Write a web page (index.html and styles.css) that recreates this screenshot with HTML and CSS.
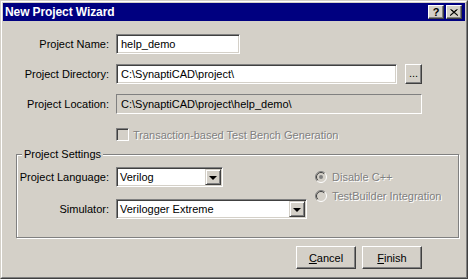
FILE: index.html
```html
<!DOCTYPE html>
<html lang="en">
<head>
    <meta charset="UTF-8">
    <title>New Project Wizard</title>
    <link rel="stylesheet" href="styles.css">
</head>
<body>
    <div class="window">
        <div class="frame">
            <div class="titlebar">
                <span class="title">New Project Wizard</span>
                <div class="caption-btns">
                    <span class="cap-btn">?</span>
                    <span class="cap-btn">
                        <svg width="8" height="7" viewBox="0 0 8 7">
                            <path d="M0.5 0.5 L7.5 6.5 M1.5 0.5 L8 6.5 M7.5 0.5 L0.5 6.5 M6.5 0.5 L0 6.5" stroke="#000" stroke-width="1" fill="none"/>
                        </svg>
                    </span>
                </div>
            </div>

            <div class="content">
                <div class="row">
                    <span class="label">Project Name:</span>
                    <div class="edit name">help_demo</div>
                </div>
                <div class="row">
                    <span class="label">Project Directory:</span>
                    <div class="edit dir">C:\SynaptiCAD\project\</div>
                    <span class="btn browse">...</span>
                </div>
                <div class="row">
                    <span class="label">Project Location:</span>
                    <div class="edit readonly">C:\SynaptiCAD\project\help_demo\</div>
                </div>
                <div class="check-row">
                    <span class="checkbox"></span>
                    <span class="disabled">Transaction-based Test Bench Generation</span>
                </div>

                <!-- Project Settings group -->
                <div class="group">
                    <span class="legend">Project Settings</span>
                    <div class="group-left">
                        <div class="row">
                            <span class="label small">Project Language:</span>
                            <div class="combo lang">
                                <span class="combo-text">Verilog</span>
                                <span class="combo-btn"><span class="arrow"></span></span>
                            </div>
                        </div>
                        <div class="row">
                            <span class="label small">Simulator:</span>
                            <div class="combo sim">
                                <span class="combo-text">Verilogger Extreme</span>
                                <span class="combo-btn"><span class="arrow"></span></span>
                            </div>
                        </div>
                    </div>
                    <div class="group-right">
                        <div class="radio-row">
                            <svg class="radio" width="12" height="12" viewBox="0 0 12 12">
                                <circle cx="6" cy="6" r="5" fill="#d4d0c8"/>
                                <path d="M2.1 9.9 A5.5 5.5 0 0 1 9.9 2.1" stroke="#808080" fill="none"/>
                                <path d="M9.9 2.1 A5.5 5.5 0 0 1 2.1 9.9" stroke="#fff" fill="none"/>
                                <path d="M2.8 9.2 A4.5 4.5 0 0 1 9.2 2.8" stroke="#404040" fill="none"/>
                                <circle cx="6" cy="6" r="2" fill="#808080"/>
                            </svg>
                            <span class="disabled">Disable C++</span>
                        </div>
                        <div class="radio-row">
                            <svg class="radio" width="12" height="12" viewBox="0 0 12 12">
                                <circle cx="6" cy="6" r="5" fill="#d4d0c8"/>
                                <path d="M2.1 9.9 A5.5 5.5 0 0 1 9.9 2.1" stroke="#808080" fill="none"/>
                                <path d="M9.9 2.1 A5.5 5.5 0 0 1 2.1 9.9" stroke="#fff" fill="none"/>
                                <path d="M2.8 9.2 A4.5 4.5 0 0 1 9.2 2.8" stroke="#404040" fill="none"/>
                            </svg>
                            <span class="disabled">TestBuilder Integration</span>
                        </div>
                    </div>
                </div>

                <div class="buttons">
                    <span class="btn push"><u>C</u>ancel</span>
                    <span class="btn push"><u>F</u>inish</span>
                </div>
            </div>
        </div>
    </div>
</body>
</html>
```

FILE: styles.css
```css
/* Base */
body {
    margin: 0;
    padding: 0;
    font-family: "Liberation Sans", Arial, sans-serif;
    font-size: 11px;
    color: #000;
    background: #d4d0c8;
}
.window {
    width: 468px;
    height: 279px;
    box-sizing: border-box;
    border: 1px solid;
    border-color: #d4d0c8 #404040 #404040 #d4d0c8;
}
.frame {
    height: 100%;
    box-sizing: border-box;
    border: 1px solid;
    border-color: #fff #808080 #808080 #fff;
    padding: 1px;
    display: flex;
    flex-direction: column;
}

/* Title bar */
.titlebar {
    height: 18px;
    background: #000080;
    color: #fff;
    display: flex;
    align-items: center;
    justify-content: space-between;
    padding: 0 3px 0 2px;
    flex-shrink: 0;
}
.title {
    font-weight: bold;
    font-size: 12px;
    letter-spacing: -0.1px;
}
.caption-btns {
    display: flex;
    gap: 2px;
}
.cap-btn {
    width: 16px;
    height: 14px;
    box-sizing: border-box;
    background: #d4d0c8;
    border: 1px solid;
    border-color: #fff #404040 #404040 #fff;
    box-shadow: inset -1px -1px #808080;
    color: #000;
    font-weight: bold;
    font-size: 11px;
    line-height: 12px;
    display: flex;
    align-items: center;
    justify-content: center;
}

/* Content */
.content {
    flex: 1;
    padding-top: 13px;
}
.row {
    display: flex;
    align-items: center;
    height: 20px;
    margin-bottom: 10px;
}
.label {
    width: 106px;
    margin-right: 7px;
    text-align: right;
}
.label.small {
    width: 92px;
}
.edit {
    height: 20px;
    box-sizing: border-box;
    background: #fff;
    border: 1px solid;
    border-color: #808080 #fff #fff #808080;
    box-shadow: inset 1px 1px #404040, inset -1px -1px #d4d0c8;
    padding: 0 4px;
    line-height: 18px;
    white-space: nowrap;
    overflow: hidden;
}
.edit.name {
    width: 124px;
}
.edit.dir {
    width: 281px;
}
.edit.readonly {
    width: 306px;
    background: #d4d0c8;
    box-shadow: none;
    border-color: #808080 #fff #fff #808080;
}
.btn {
    box-sizing: border-box;
    background: #d4d0c8;
    border: 1px solid;
    border-color: #fff #404040 #404040 #fff;
    box-shadow: inset -1px -1px #808080;
    display: flex;
    align-items: center;
    justify-content: center;
}
.browse {
    width: 17px;
    height: 20px;
    margin-left: 8px;
    line-height: 16px;
    align-items: flex-end;
    padding-bottom: 2px;
}

.check-row {
    display: flex;
    align-items: center;
    height: 13px;
    margin-top: 14px;
    padding-left: 113px;
}
.checkbox {
    width: 13px;
    height: 13px;
    box-sizing: border-box;
    border: 1px solid;
    border-color: #808080 #fff #fff #808080;
    box-shadow: inset 1px 1px #404040, inset -1px -1px #d4d0c8;
    background: #d4d0c8;
    margin-right: 4px;
}
.disabled {
    color: #808080;
    text-shadow: 1px 1px 0 #fff;
    white-space: nowrap;
}

/* Group box */
.group {
    position: relative;
    margin: 13px 0 0 13px;
    width: 443px;
    height: 84px;
    box-sizing: border-box;
    border: 1px solid #808080;
    box-shadow: inset 1px 1px #fff, 1px 1px 0 #fff;
    padding-top: 12px;
    display: flex;
}
.legend {
    position: absolute;
    top: -8px;
    left: 5px;
    padding: 0 2px;
    background: #d4d0c8;
    line-height: 14px;
}
.group-left .row {
    margin-bottom: 12px;
}
.combo {
    height: 20px;
    box-sizing: border-box;
    background: #fff;
    border: 1px solid;
    border-color: #808080 #fff #fff #808080;
    box-shadow: inset 1px 1px #404040, inset -1px -1px #d4d0c8;
    padding: 1px;
    display: flex;
    align-items: center;
}
.combo.lang {
    width: 107px;
}
.combo.sim {
    width: 191px;
}
.combo-text {
    flex: 1;
    padding-left: 2px;
    white-space: nowrap;
}
.combo-btn {
    width: 16px;
    height: 16px;
    box-sizing: border-box;
    background: #d4d0c8;
    border: 1px solid;
    border-color: #d4d0c8 #404040 #404040 #d4d0c8;
    box-shadow: inset 1px 1px #fff, inset -1px -1px #808080;
    display: flex;
    align-items: center;
    justify-content: center;
}
.arrow {
    width: 0;
    height: 0;
    border-left: 4px solid transparent;
    border-right: 4px solid transparent;
    border-top: 4px solid #000;
    margin-top: 1px;
}
.group-right {
    margin-left: 8px;
    padding-top: 3px;
    display: flex;
    flex-direction: column;
    gap: 6px;
}
.radio-row {
    display: flex;
    align-items: center;
    height: 13px;
}
.radio {
    margin-right: 5px;
    flex-shrink: 0;
}

/* Dialog buttons */
.buttons {
    display: flex;
    justify-content: flex-end;
    gap: 6px;
    margin-top: 8px;
    padding-right: 43px;
}
.push {
    width: 60px;
    height: 23px;
}
```
